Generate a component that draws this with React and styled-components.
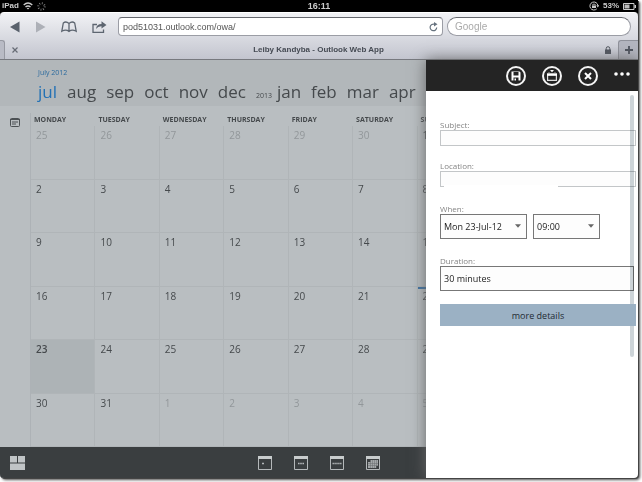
import React from "react";
import styled, { createGlobalStyle, css } from "styled-components";

const GlobalStyle = createGlobalStyle`
  * {
    box-sizing: border-box;
  }
  body {
    margin: 0;
    background-color: #fff;
    font-family: "Open Sans", "Noto Sans", sans-serif;
  }
  button, input, select {
    font-family: inherit;
    margin: 0;
  }
  button {
    padding: 0;
    border: 0;
    background: none;
    color: inherit;
  }
  svg {
    display: block;
    flex-shrink: 0;
  }
`;

const PageStyles = styled.div`
  height: 100vh;
  padding: 0 4px 4px 0;
  overflow: hidden;
`;

const DeviceStyles = styled.div`
  height: 100%;
  display: flex;
  flex-direction: column;
  overflow: hidden;
  border-radius: 0 0 4px 4px;
  background-color: #000;
  box-shadow: 1px 1px 0 #444, 2px 2px 3px rgba(0, 0, 0, 0.7);
`;

const StatusBarStyles = styled.div`
  height: 12px;
  flex-shrink: 0;
  display: grid;
  grid-template-columns: 1fr auto 1fr;
  align-items: center;
  padding: 0 2px;
  color: #ccc;
  font: bold 8px/12px "Liberation Sans", sans-serif;
  .clock {
    font-size: 9px;
  }
  .side {
    display: flex;
    align-items: center;
    gap: 4px;
  }
  .right {
    justify-content: flex-end;
  }
`;

const BrowserStyles = styled.div`
  flex-shrink: 0;
  border-top: 1px solid #fff;
  border-bottom: 1px solid #77797f;
  border-radius: 4px 4px 0 0;
  background: linear-gradient(#f1f2f5, #c3c5cf);
  color: #5b626d;
  font-family: "Liberation Sans", sans-serif;
`;

const ToolbarStyles = styled.div`
  display: flex;
  align-items: center;
  gap: 4px;
  height: 27px;
  padding: 0 7px 0 8px;
`;

const ToolbarButtons = styled.div`
  display: flex;
  align-items: center;
  justify-content: space-between;
  width: 99px;
  margin-right: 7px;
`;

const FieldStyles = styled.div`
  flex: ${(props) => props.$grow} 1 0;
  display: flex;
  align-items: center;
  height: 19px;
  padding: 0 4px;
  border: 1px solid #9b9da5;
  border-top-color: #65676d;
  border-radius: ${(props) => (props.$round ? "10px" : "4px")};
  background-color: #fff;
  input {
    flex: 1;
    min-width: 0;
    padding: 0 ${(props) => (props.$round ? "3px" : "0")};
    border: 0;
    outline: 0;
    background: none;
    color: #555;
    font-size: ${(props) => (props.$round ? "10px" : "9px")};
  }
  input::placeholder {
    color: #aaa;
  }
`;

const TabsStyles = styled.div`
  display: flex;
  height: 19px;
`;

const BackTab = styled.div`
  width: 5px;
  border: 1px solid #9698a1;
  border-left: 0;
  border-bottom: 0;
  border-radius: 0 3px 0 0;
  background-color: #b9bbc5;
`;

const ActiveTab = styled.div`
  flex: 1;
  display: grid;
  grid-template-columns: 20px 1fr 6px;
  align-items: center;
  padding: 0 7px;
  text-align: center;
  font-size: 8px;
  font-weight: bold;
  color: #454a53;
`;

const NewTab = styled.button`
  width: 20px;
  display: flex;
  align-items: center;
  justify-content: center;
  border: 1px solid #8f919a;
  border-right: 0;
  border-bottom: 0;
  border-radius: 3px 0 0 0;
  background-color: #b3b5bf;
`;

const AppStyles = styled.div`
  flex: 1;
  min-height: 0;
  display: flex;
`;

const MailCalendar = styled.main`
  flex: 1;
  min-width: 0;
  display: flex;
  flex-direction: column;
  overflow: hidden;
  background-color: #b9bec1;
  color: #45494c;
`;

const MonthsStyles = styled.header`
  flex-shrink: 0;
  height: 46px;
  padding: 8px 0 0 38px;
  background-color: #b2b7ba;
  .current {
    font-size: 7px;
    line-height: 10px;
    color: #2b6a9e;
  }
  nav {
    display: flex;
    align-items: baseline;
    gap: 10px;
    white-space: nowrap;
  }
`;

const Month = styled.a`
  font-size: 17px;
  line-height: 28px;
  text-decoration: none;
  color: ${(props) => (props.$active ? "#2472b5" : "#45494c")};
`;

const Year = styled.span`
  margin-right: -5px;
  font-size: 7px;
`;

const CalendarBody = styled.div`
  flex: 1;
  min-height: 0;
  display: flex;
`;

const Rail = styled.div`
  flex: 0 0 30px;
  padding: 12px 0 0 10px;
`;

const GridWrap = styled.div`
  flex: 1 0 452px;
  margin-top: 7px;
  border-left: 1px solid #adb2b6;
`;

const MonthGrid = styled.table`
  width: 100%;
  height: 100%;
  table-layout: fixed;
  border-collapse: separate;
  border-spacing: 0;
  th {
    height: 13px;
    padding: 0 0 0 3px;
    text-align: left;
    font-size: 7px;
    line-height: 13px;
    font-weight: 700;
  }
`;

const Day = styled.td`
  padding: 2px 0 0 5px;
  vertical-align: top;
  font-size: 10px;
  line-height: 15px;
  border-right: 1px solid #b0b5b8;
  border-bottom: 1px solid #b0b5b8;
  color: ${(props) => (props.$muted ? "#92979a" : "#45494c")};
  ${(props) =>
    props.$today &&
    css`
      background-color: #adb3b6;
      font-weight: 600;
    `}
  ${(props) =>
    props.$busy &&
    css`
      box-shadow: inset 0 2px 0 #3b71a3;
    `}
`;

const BottomBar = styled.footer`
  flex-shrink: 0;
  display: grid;
  grid-template-columns: 248px 1fr;
  align-items: center;
  height: 31px;
  padding-left: 10px;
  background-color: #3a3e40;
  .views {
    display: flex;
    gap: 22px;
  }
`;

const PanelStyles = styled.aside`
  position: relative;
  flex: 0 0 212px;
  display: flex;
  flex-direction: column;
  background-color: #fff;
  box-shadow: 0 0 14px #666;
`;

const PanelHeader = styled.div`
  display: flex;
  align-items: center;
  justify-content: flex-end;
  gap: 16px;
  height: 31px;
  padding-right: 8px;
  background-color: #242424;
  color: #fff;
  .more {
    height: 20px;
  }
`;

const RoundButton = styled.button`
  width: 20px;
  height: 20px;
  display: flex;
  align-items: center;
  justify-content: center;
  border: 2px solid #f4f4f4;
  border-radius: 50%;
`;

const FormStyles = styled.form`
  padding: 28px 2px 0 14px;
`;

const Group = styled.div`
  margin-bottom: ${(props) => props.$space}px;
  label {
    display: block;
    font-size: 8px;
    line-height: 11px;
    color: #858585;
  }
`;

const LineInput = styled.input`
  display: block;
  width: 100%;
  height: 16px;
  padding: 0 4px;
  border: 1px solid #c3c6c8;
  border-radius: 0;
  background-color: #fdfdfd;
  font-size: 9px;
`;

const Erased = styled.div`
  position: relative;
  &::after {
    content: "";
    position: absolute;
    left: 4px;
    bottom: 0;
    width: 114px;
    height: 2px;
    background-color: #fff;
  }
`;

const Row = styled.div`
  display: flex;
  gap: 6px;
`;

const SelectWrap = styled.div`
  position: relative;
  width: ${(props) => props.$width}px;
  select {
    appearance: none;
    display: block;
    width: 100%;
    height: 25px;
    padding: 0 3px;
    border: 1px solid #777;
    border-radius: 0;
    background-color: #fdfdfd;
    color: #222;
    font-size: 9px;
  }
  svg {
    position: absolute;
    right: 6px;
    top: 10px;
    pointer-events: none;
  }
`;

const DurationInput = styled.input`
  display: block;
  width: calc(100% - 2px);
  height: 25px;
  padding: 0 3px;
  border: 1px solid #777;
  border-radius: 0;
  background-color: #fdfdfd;
  color: #222;
  font-size: 9px;
`;

const MoreDetails = styled.button`
  position: relative;
  z-index: 1;
  display: block;
  width: 100%;
  height: 22px;
  background-color: #9bb1c4;
  color: #222a32;
  font-size: 9px;
`;

const ScrollThumb = styled.div`
  position: absolute;
  right: 4px;
  top: 35px;
  width: 4px;
  height: 262px;
  border-radius: 2px;
  background-color: #cdd4d8;
  mix-blend-mode: multiply;
`;

const weekdays = [
  "MONDAY",
  "TUESDAY",
  "WEDNESDAY",
  "THURSDAY",
  "FRIDAY",
  "SATURDAY",
  "SUNDAY",
];

// 42 cells starting on Monday 25 June 2012
const weeks = Array.from({ length: 6 }, (_, week) =>
  Array.from({ length: 7 }, (_, day) => {
    const date = new Date(2012, 5, 25 + week * 7 + day);
    return { day: date.getDate(), month: date.getMonth() };
  })
);

const viewDots = {
  Day: "M4 7.500h2",
  "Work week": "M4 7.500h1.600M6.200 7.500h1.600M8.400 7.500h1.600",
  Week: "M2.500 7.500h1.400M4.400 7.500h1.400M6.300 7.500h1.400M8.200 7.500h1.400M10.100 7.500h1.400",
};

const ViewIcon = ({ name }) => (
  <svg width="14" height="14" viewBox="0 0 14 14" fill="none">
    <path d="M.5 1v12.5h13V1" stroke="#b4b8ba" />
    <path d="M0 1.500h14" stroke="#c8cccd" strokeWidth="3" />
    {name === "Month" ? (
      <>
        <path d="M4.500 4H12v6h-2v2H2V6h2.500z" fill="#a3a7a9" />
        <path
          d="M2 7.500h10M2 9.500h10M4.500 4v8M6.500 4v8M8.500 4v8M10.500 4v8"
          stroke="#686c6e"
          strokeWidth=".5"
        />
      </>
    ) : (
      <path d={viewDots[name]} stroke="#b4b8ba" strokeWidth="1.600" />
    )}
  </svg>
);

const Caret = () => (
  <svg width="6" height="4" viewBox="0 0 6 4">
    <path d="M0 .3h6L3 3.700z" fill="#666" />
  </svg>
);

const StatusBar = () => (
  <StatusBarStyles>
    <div className="side">
      <span>iPad</span>
      <svg width="10" height="8" viewBox="0 0 10 8" fill="none" stroke="#ccc">
        <path d="M.7 3Q5-.8 9.300 3" strokeWidth="1.400" />
        <path d="M2.500 5Q5 2.800 7.500 5" strokeWidth="1.400" />
        <path d="M5 7.500L3.700 6.200Q5 5.200 6.300 6.200z" fill="#ccc" stroke="none" />
      </svg>
      <svg width="9" height="9" viewBox="0 0 9 9" fill="none">
        <circle
          cx="4.500"
          cy="4.500"
          r="3.200"
          stroke="#888"
          strokeWidth="2"
          strokeDasharray=".8 1.710"
        />
      </svg>
    </div>
    <span className="clock">16:11</span>
    <div className="side right">
      <svg width="10" height="10" viewBox="0 0 10 10" fill="none" stroke="#ccc">
        <path d="M7.800 7.800A4 4 0 1 1 8.900 4.500" />
        <path d="M7.300 4.300h3L8.800 6.500z" fill="#ccc" stroke="none" />
        <path d="M3 4.500h4V7H3z" fill="#ccc" stroke="none" />
        <path d="M3.800 4.500V3.200h2.400v1.300" strokeWidth=".8" />
      </svg>
      <span>53%</span>
      <svg width="13" height="7" viewBox="0 0 13 7" fill="none">
        <path d="M.5.5h10.500v6H.5z" stroke="#ccc" />
        <path d="M1.500 1.500h5v4h-5z" fill="#bbb" />
        <path d="M11.500 2H13v3h-1.500z" fill="#ccc" />
      </svg>
    </div>
  </StatusBarStyles>
);

const Browser = () => (
  <BrowserStyles>
    <ToolbarStyles>
      <ToolbarButtons>
        <button type="button" aria-label="Back">
          <svg width="12" height="12" viewBox="0 0 12 12">
            <path d="M2 6l9.500-5.500v11z" fill="#59616c" />
          </svg>
        </button>
        <button type="button" aria-label="Forward">
          <svg width="12" height="12" viewBox="0 0 12 12">
            <path d="M10.500 6L1 .5v11z" fill="#adb0b7" />
          </svg>
        </button>
        <button type="button" aria-label="Bookmarks">
          <svg width="16" height="12" viewBox="0 0 16 12" fill="none">
            <path
              d="M8 2.500Q5-.2 2.300 2L.8 10.300Q5 8 8 10.500Q11 8 15.200 10.300L13.700 2Q11-.2 8 2.500zV11"
              stroke="#5d6570"
              strokeWidth="1.300"
            />
          </svg>
        </button>
        <button type="button" aria-label="Share">
          <svg width="15" height="12" viewBox="0 0 15 12" fill="none">
            <path d="M5 3.500H1v8h10.500V8.500" stroke="#5d6570" strokeWidth="1.300" />
            <path d="M4 8Q4.500 3 9.500 3V.3L14.500 4 9.500 7.500V5.200Q6 5 4 8z" fill="#5d6570" />
          </svg>
        </button>
      </ToolbarButtons>
      <FieldStyles $grow={315}>
        <input aria-label="Address" defaultValue="pod51031.outlook.com/owa/" />
        <button type="button" aria-label="Reload">
          <svg width="9" height="10" viewBox="0 0 9 10" fill="none">
            <path d="M7.700 5.500A3.300 3.300 0 1 1 5.500 2.300" stroke="#66727e" strokeWidth="1.200" />
            <path d="M5 0l3.500 2.300L5 4.500z" fill="#66727e" />
          </svg>
        </button>
      </FieldStyles>
      <FieldStyles $grow={174} $round>
        <input aria-label="Search" placeholder="Google" />
      </FieldStyles>
    </ToolbarStyles>
    <TabsStyles>
      <BackTab />
      <ActiveTab>
        <button type="button" aria-label="Close tab">
          <svg width="6" height="6" viewBox="0 0 6 6">
            <path d="M.5.5l5 5M5.500.5l-5 5" stroke="#666b75" strokeWidth="1.200" />
          </svg>
        </button>
        <span>Leiby Kandyba - Outlook Web App</span>
        <svg width="6" height="8" viewBox="0 0 6 8" fill="none">
          <path d="M0 3.500h6V8H0z" fill="#51565f" />
          <path d="M1.200 4V2.500a1.800 1.800 0 0 1 3.600 0V4" stroke="#51565f" />
        </svg>
      </ActiveTab>
      <NewTab type="button" aria-label="New tab">
        <svg width="8" height="8" viewBox="0 0 8 8">
          <path d="M4 0v8M0 4h8" stroke="#4d525c" strokeWidth="1.800" />
        </svg>
      </NewTab>
    </TabsStyles>
  </BrowserStyles>
);

const Calendar = () => (
  <MailCalendar>
    <MonthsStyles>
      <div className="current">July 2012</div>
      <nav>
        {["jul", "aug", "sep", "oct", "nov", "dec"].map((month) => (
          <Month key={month} href={`#${month}`} $active={month === "jul"}>
            {month}
          </Month>
        ))}
        <Year>2013</Year>
        {["jan", "feb", "mar", "apr", "may"].map((month) => (
          <Month key={month} href={`#${month}`}>
            {month}
          </Month>
        ))}
      </nav>
    </MonthsStyles>
    <CalendarBody>
      <Rail>
        <svg width="10" height="9" viewBox="0 0 10 9" fill="none" stroke="#4c5154">
          <rect x=".5" y=".5" width="9" height="8" rx="1" />
          <path d="M0 1.500h10M2 4h6M2 6h4" />
        </svg>
      </Rail>
      <GridWrap>
        <MonthGrid>
          <thead>
            <tr>
              {weekdays.map((name) => (
                <th key={name} scope="col">
                  {name}
                </th>
              ))}
            </tr>
          </thead>
          <tbody>
            {weeks.map((week, index) => (
              <tr key={index}>
                {week.map(({ day, month }) => (
                  <Day
                    key={day}
                    $muted={month !== 6}
                    $today={month === 6 && day === 23}
                    $busy={month === 6 && day === 22}
                  >
                    {day}
                  </Day>
                ))}
              </tr>
            ))}
          </tbody>
        </MonthGrid>
      </GridWrap>
    </CalendarBody>
    <BottomBar>
      <button type="button" aria-label="Apps">
        <svg width="15" height="14" viewBox="0 0 15 14" fill="#c0c4c6">
          <path d="M0 0h7v6.500H0zM8 0h7v6.500H8zM0 7.500h15V14H0z" />
        </svg>
      </button>
      <div className="views">
        {["Day", "Work week", "Week", "Month"].map((name) => (
          <button key={name} type="button" aria-label={name}>
            <ViewIcon name={name} />
          </button>
        ))}
      </div>
    </BottomBar>
  </MailCalendar>
);

const NewEventPanel = () => (
  <PanelStyles>
    <PanelHeader>
      <RoundButton type="button" aria-label="Save">
        <svg width="10" height="10" viewBox="0 0 10 10">
          <path
            d="M.5.5h8l1 1v8h-9zM2.500 1v3.500h5V1zM2.500 6.500V9.500h1V7.500h1.500V9.500h2.500V6.500z"
            fill="#fff"
            fillRule="evenodd"
          />
        </svg>
      </RoundButton>
      <RoundButton type="button" aria-label="Calendar">
        <svg width="12" height="12" viewBox="0 0 12 12" fill="none">
          <path d="M1.600 5h8.800v5.400H1.600z" stroke="#ddd" strokeWidth="1.200" />
          <path d="M1 4.500h10" stroke="#fff" strokeWidth="2.400" />
          <path d="M4 0h4L6 2.200z" fill="#fff" />
          <path d="M3 3.500V2.200M9 3.500V2.200" stroke="#bbb" />
        </svg>
      </RoundButton>
      <RoundButton type="button" aria-label="Discard">
        <svg width="8" height="8" viewBox="0 0 8 8">
          <path d="M1 1l6 6M7 1L1 7" stroke="#fff" strokeWidth="2" />
        </svg>
      </RoundButton>
      <button type="button" className="more" aria-label="More">
        <svg width="16" height="16" viewBox="0 0 16 16" fill="#fff">
          <circle cx="2" cy="6" r="1.800" />
          <circle cx="8" cy="6" r="1.800" />
          <circle cx="14" cy="6" r="1.800" />
        </svg>
      </button>
    </PanelHeader>
    <FormStyles>
      <Group $space={14}>
        <label htmlFor="subject">Subject:</label>
        <LineInput id="subject" />
      </Group>
      <Group $space={16}>
        <label htmlFor="location">Location:</label>
        <Erased>
          <LineInput id="location" />
        </Erased>
      </Group>
      <Group $space={16}>
        <label htmlFor="date">When:</label>
        <Row>
          <SelectWrap $width={87}>
            <select id="date">
              <option>Mon 23-Jul-12</option>
            </select>
            <Caret />
          </SelectWrap>
          <SelectWrap $width={67}>
            <select aria-label="Time">
              <option>09:00</option>
            </select>
            <Caret />
          </SelectWrap>
        </Row>
      </Group>
      <Group $space={13}>
        <label htmlFor="duration">Duration:</label>
        <DurationInput id="duration" defaultValue="30 minutes" />
      </Group>
      <MoreDetails type="button">more details</MoreDetails>
    </FormStyles>
    <ScrollThumb />
  </PanelStyles>
);

const App = () => (
  <>
    <GlobalStyle />
    <PageStyles>
      <DeviceStyles>
        <StatusBar />
        <Browser />
        <AppStyles>
          <Calendar />
          <NewEventPanel />
        </AppStyles>
      </DeviceStyles>
    </PageStyles>
  </>
);

export default App;
